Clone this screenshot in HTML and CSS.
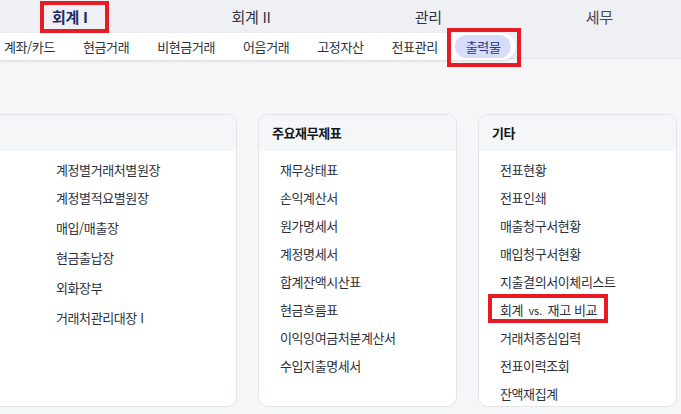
FILE: index.html
```html
<!DOCTYPE html>
<html lang="ko">
<head>
    <meta charset="UTF-8">
    <meta name="viewport" content="width=device-width, initial-scale=1.0">
    <title>출력물</title>
    <link rel="stylesheet" href="styles.css">
</head>
<body>

<div class="topbar">
    <nav class="main-tabs">
        <a class="tab active">회계 I</a>
        <a class="tab">회계 II</a>
        <a class="tab">관리</a>
        <a class="tab muted">세무</a>
    </nav>
    <nav class="sub-nav">
        <a class="sub-item">계좌/카드</a>
        <a class="sub-item">현금거래</a>
        <a class="sub-item">비현금거래</a>
        <a class="sub-item">어음거래</a>
        <a class="sub-item">고정자산</a>
        <a class="sub-item">전표관리</a>
        <a class="sub-item selected">출력물</a>
    </nav>
</div>

<div class="cards">
    <section class="card wide">
        <div class="card-head"></div>
        <ul class="card-list ledger">
            <li>계정별거래처별원장</li>
            <li>계정별적요별원장</li>
            <li class="tall">매입/매출장</li>
            <li class="tall">현금출납장</li>
            <li class="tall">외화장부</li>
            <li class="tall">거래처관리대장 I</li>
        </ul>
    </section>

    <section class="card">
        <div class="card-head">주요재무제표</div>
        <ul class="card-list">
            <li>재무상태표</li>
            <li>손익계산서</li>
            <li>원가명세서</li>
            <li>계정명세서</li>
            <li>합계잔액시산표</li>
            <li>현금흐름표</li>
            <li>이익잉여금처분계산서</li>
            <li>수입지출명세서</li>
        </ul>
    </section>

    <section class="card">
        <div class="card-head">기타</div>
        <ul class="card-list">
            <li>전표현황</li>
            <li>전표인쇄</li>
            <li>매출청구서현황</li>
            <li>매입청구서현황</li>
            <li>지출결의서이체리스트</li>
            <li>회계 <span class="vs">vs.</span> 재고 비교</li>
            <li>거래처중심입력</li>
            <li>전표이력조회</li>
            <li>잔액재집계</li>
        </ul>
    </section>
</div>

<!-- red highlight boxes drawn over the screen -->
<div class="mark mark-tab"></div>
<div class="mark mark-sub"></div>
<div class="mark mark-item"></div>

</body>
</html>
```

FILE: styles.css
```css
body {
    margin: 0;
    background-color: #f5f6f8;
    font-family: "Noto Sans CJK KR", "Noto Sans", sans-serif;
    color: #2b303b;
    width: 681px;
    height: 414px;
    overflow: hidden;
    position: relative;
}

a {
    cursor: pointer;
}

.topbar {
    height: 58px;
    background-color: #eef0f3;
    border-bottom: 1px solid #dde0e5;
}

.main-tabs {
    display: flex;
    height: 33px;
    margin-left: -20px;
}

.tab {
    padding: 0 72px;
    line-height: 33px;
    font-size: 15px;
    letter-spacing: -0.3px;
    color: #2f3440;
    white-space: nowrap;
}

.tab.active {
    font-weight: bold;
    color: #1d2b6b;
}

.tab.muted {
    color: #4a4650;
}

.sub-nav {
    display: inline-flex;
    gap: 6px;
    margin-left: -7px;
    padding: 2px 5px 2px 0;
    background-color: #fff;
    border-radius: 0 14px 14px 0;
    box-shadow: 0 1px 3px rgba(0, 0, 0, 0.12);
}

.sub-item {
    padding: 0 11px;
    height: 23px;
    line-height: 23px;
    font-size: 13px;
    letter-spacing: -0.4px;
    color: #2b303b;
    white-space: nowrap;
    border-radius: 12px;
}

.sub-item.selected {
    background-color: #d5ddf8;
    color: #27378a;
}

.cards {
    display: flex;
    gap: 21px;
    margin-top: 55px;
    margin-left: -63px;
}

.card {
    width: 199px;
    height: 293px;
    box-sizing: border-box;
    background-color: #fff;
    border: 1px solid #e1e4e8;
    border-radius: 10px;
    overflow: hidden;
    flex-shrink: 0;
}

.card.wide {
    width: 300px;
}

.card-head {
    height: 36px;
    line-height: 36px;
    padding-left: 13px;
    background-color: #f5f6f8;
    font-size: 13px;
    font-weight: bold;
    letter-spacing: -0.4px;
    color: #151820;
}

.card-list {
    list-style: none;
    margin: 0;
    padding: 5px 0 0 21px;
}

.card-list li {
    height: 28px;
    line-height: 28px;
    font-size: 13px;
    letter-spacing: -0.4px;
    white-space: nowrap;
}

.card-list.ledger {
    padding-left: 118px;
}

.card-list li.tall {
    height: 30px;
    line-height: 30px;
}

.card-list.ledger li:nth-child(3) {
    margin-top: 1px;
}

.vs {
    font-size: 11px;
    letter-spacing: 0;
    margin: 0 2px;
}

.mark {
    position: absolute;
    box-sizing: border-box;
    border: 4px solid #e61b24;
}

.mark-tab {
    left: 40px;
    top: 1px;
    width: 69px;
    height: 32px;
}

.mark-sub {
    left: 447px;
    top: 28px;
    width: 74px;
    height: 39px;
}

.mark-item {
    left: 488px;
    top: 294px;
    width: 120px;
    height: 29px;
}
```
